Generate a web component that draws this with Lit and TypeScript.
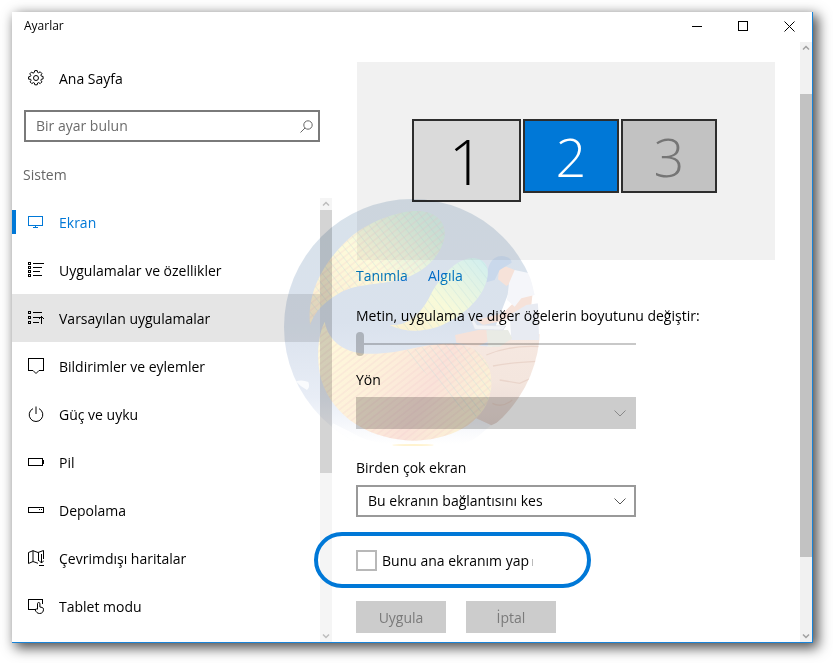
import { LitElement, html, css, svg, nothing } from "lit";
import { customElement } from "lit/decorators.js";
import { classMap } from "lit/directives/class-map.js";

const icons = {
  display: svg`<path d="M.5 2.500h14v9H.5zM7.500 12v1M5 13.500h5"/>`,
  apps: svg`<path d="M.5 .5h2v2h-2zM.5 4.500h2v2h-2zM.5 8.500h2v2h-2zM.5 12.500h2v2h-2zM5 1.500h11M5 5.500h9M5 9.500h7M5 13.500h9"/>`,
  defaults: svg`<path d="M.5 1.500h2v2h-2zM.5 6.500h2v2h-2zM.5 11.500h2v2h-2zM5 2.500h9M5 7.500h7M5 12.500h6M13.500 6v8"/><path class="smooth" d="M11 9l2.500-2.500L16 9"/>`,
  message: svg`<path d="M5 12.500H.5V.5h15v12H11"/><path class="smooth" d="M5 12.500l3 3 3-3"/>`,
  power: svg`<g class="smooth"><path d="M5 2.600a6.800 6.800 0 1 0 6 0M8 .5v7.500"/></g>`,
  battery: svg`<path d="M.5 4.500h14v7H.5zM15.500 6v4"/>`,
  storage: svg`<path d="M.5 5.500h15v5H.5zM11 7.500h1M13 7.500h1"/>`,
  map: svg`<g class="smooth"><path d="M.5 2.500L5 .7l5 1.800L15.500 .5V9M.5 2.500v11L5 11.500l5 1.800M5 .7v10.800M10.500 2.500V11M13.500 4v9M11 10.500l2.500 2.500 2.500-2.500M11 15.500h5"/></g>`,
  tablet: svg`<path d="M8 11.500H.5v-10h14V6"/><g class="smooth"><path d="M9.500 11V5.700a1.200 1.200 0 0 1 2.400 0V9l2.300.5q1.300.4 1.300 1.700c0 2.800-1.500 4.300-3.800 4.300-2.400 0-3.500-1.400-4.600-3.700.8-1.100 1.700-.9 2.400-.2"/></g>`,
  gear: svg`<g class="smooth"><circle cx="8" cy="8" r="2.500"/><path d="M6.800 .6h2.400l.4 1.800 1 .4 1.600-1 1.700 1.700-1 1.600.4 1 1.800.4v2.400l-1.800.4-.4 1 1 1.600-1.700 1.700-1.600-1-1 .4-.4 1.800H6.800l-.4-1.800-1-.4-1.600 1-1.700-1.700 1-1.600-.4-1L.6 9.200V6.800l1.800-.4.4-1-1-1.600 1.700-1.700 1.600 1 1-.4z"/></g>`,
};

const glyph = (shape: unknown) =>
  html`<svg class="icon" viewBox="0 0 16 16" aria-hidden="true">${shape}</svg>`;

const chevron = html`<svg class="chevron" viewBox="0 0 12 7" aria-hidden="true"><path d="M.5 .5L6 6 11.500 .5"/></svg>`;

const navItems = [
  { label: "Ekran", icon: icons.display, current: true },
  { label: "Uygulamalar ve özellikler", icon: icons.apps },
  { label: "Varsayılan uygulamalar", icon: icons.defaults, hover: true },
  { label: "Bildirimler ve eylemler", icon: icons.message },
  { label: "Güç ve uyku", icon: icons.power },
  { label: "Pil", icon: icons.battery },
  { label: "Depolama", icon: icons.storage },
  { label: "Çevrimdışı haritalar", icon: icons.map },
  { label: "Tablet modu", icon: icons.tablet },
];

@customElement("scroll-rail")
class ScrollRail extends LitElement {
  static styles = css`
    :host { display: flex; flex-direction: column; width: 12px; background: var(--track, #f1f1f1); }
    svg { width: 12px; height: 12px; flex: none; fill: none; stroke: var(--arrow, #a0a0a0); stroke-width: 1.5; }
    .before { flex: var(--before, 0) 0 0; }
    .thumb { flex: var(--thumb, 1) 0 0; background: var(--thumb-color, #c2c2c2); }
    .after { flex: var(--after, 1) 0 0; }
  `;
  render() {
    return html`
      <svg viewBox="0 0 12 12"><path d="M3 7.500l3-3 3 3"/></svg>
      <div class="before"></div><div class="thumb"></div><div class="after"></div>
      <svg viewBox="0 0 12 12"><path d="M3 4.500l3 3 3-3"/></svg>
    `;
  }
}

@customElement("brand-watermark")
class BrandWatermark extends LitElement {
  static styles = css`
    :host { display: block; width: 256px; height: 256px; pointer-events: none; mix-blend-mode: multiply; }
    svg { display: block; width: 100%; height: 100%; }
  `;
  render() {
    const swoosh = "M121 405C110 290 180 195 250 135C315 85 400 60 450 63C512 68 535 110 522 152C505 212 450 255 385 270C320 285 250 282 205 312C165 335 135 365 121 405Z";
    const bean = "M360 405C420 410 460 360 480 320C510 260 560 205 610 204C650 205 663 240 650 275C630 340 560 390 500 412C450 428 400 425 360 405Z";
    const bowl = "M165 395C175 450 220 488 290 491C400 495 460 455 560 462C640 470 670 530 665 590C655 690 560 745 440 752C300 752 190 680 155 570C140 510 142 440 165 395Z";
    return html`
      <svg viewBox="43 27 768 768" aria-hidden="true">
        <defs>
          <clipPath id="disc"><circle cx="427" cy="411" r="384"/></clipPath>
          <linearGradient id="sky" x1="0" y1="0" x2="0" y2="1">
            <stop offset="0" stop-color="#d8e2ea"/><stop offset=".5" stop-color="#dae2ed"/>
            <stop offset=".78" stop-color="#e8edf6"/><stop offset=".96" stop-color="#fff"/>
          </linearGradient>
          <linearGradient id="leaf" x1="0" y1="1" x2="1" y2="0">
            <stop offset="0" stop-color="#faecd0"/><stop offset=".5" stop-color="#fdfadb"/><stop offset=".85" stop-color="#d6ecdf"/><stop offset="1" stop-color="#d0e7e4"/>
          </linearGradient>
          <linearGradient id="aqua" x1="0" y1="1" x2="1" y2="0">
            <stop offset="0" stop-color="#fdf0cf"/><stop offset=".45" stop-color="#f8fad9"/><stop offset="1" stop-color="#cfeef0"/>
          </linearGradient>
          <linearGradient id="warm" x1="0" y1="0" x2="1" y2=".4">
            <stop offset="0" stop-color="#fffbdc"/><stop offset=".45" stop-color="#fdf0da"/><stop offset=".75" stop-color="#fae2d9"/><stop offset="1" stop-color="#fbf0d6"/>
          </linearGradient>
          <linearGradient id="stone" x1="0" y1="0" x2="0" y2="1">
            <stop offset="0" stop-color="#f6e8e1"/><stop offset=".5" stop-color="#f4e6de"/><stop offset="1" stop-color="#e9dad5"/>
          </linearGradient>
          <pattern id="hatch" width="20" height="16" patternUnits="userSpaceOnUse" patternTransform="rotate(-38)">
            <path d="M0 8H20" stroke="#eec4cb" stroke-width="2" stroke-opacity=".6"/>
          </pattern>
          <pattern id="mesh" width="20" height="20" patternUnits="userSpaceOnUse" patternTransform="rotate(52)">
            <path d="M0 10H20" stroke="#bcdcdc" stroke-width="1.500" stroke-opacity=".6"/>
          </pattern>
        </defs>
        <g clip-path="url(#disc)">
          <path fill="url(#sky)" d="M0 0H700L780 245L720 300L650 480L665 705L560 795H0Z"/>
          <path fill="#fff" fill-opacity=".8" d="M78 574q20-6 38 2q6 16-4 24q-18-8-34-26zM190 700q40 20 80 40t160 30v30H150z"/>
          <path fill="url(#stone)" d="M560 462L665 470L730 442L811 432V600L700 690L665 706L610 680L640 560Z"/>
          <path fill="none" stroke="#ead5cb" stroke-width="4" d="M650 495q70-30 160-25M670 528q50-10 130-14M690 570l60 10 40-18M668 640q30 15 60-10"/>
          <path fill="#f6e2d9" d="M690 222L735 240L740 268L710 288L685 268ZM750 320L790 300L785 345L700 392L640 405L620 390L700 370ZM556 435L650 415L690 440L620 470L560 458Z"/>
          <path fill="#f5f6fa" d="M735 240L780 250L795 315L755 325L735 350L712 330L718 280Z"/>
          <path fill="#e8ebf2" d="M720 375L770 345L806 340L808 450L725 450Z"/>
          <path fill="#e9ebe5" d="M650 420L715 420L728 445L690 470H655Z"/>
          <path fill="#c9d8eb" d="M650 277C652 225 665 200 695 198Q725 200 726 218L690 240L675 270Z"/>
          <path fill="#f2f4f7" stroke="#dfe3ea" stroke-width="2" d="M590 355L622 405L708 408L700 420L615 418Z"/>
          <path fill="url(#leaf)" d=${swoosh}/><path fill="url(#mesh)" d=${swoosh}/>
          <path fill="url(#hatch)" d=${swoosh}/>
          <path fill="url(#aqua)" d=${bean}/><path fill="url(#mesh)" d=${bean}/>
          <path fill="url(#warm)" d=${bowl}/><path fill="url(#hatch)" d=${bowl}/>
          <path fill="url(#mesh)" d="M400 483C450 475 500 457 560 462C640 470 670 530 665 590C660 630 640 660 610 690Z"/>
          <ellipse cx="430" cy="765" rx="62" ry="3" fill="#fff3cf"/>
        </g>
      </svg>
    `;
  }
}

@customElement("app-root")
class AppRoot extends LitElement {
  static styles = css`
    :host {
      display: block;
      padding: 12px 20px 20px 12px;
      font: 14px/24px "Open Sans", "Noto Sans", sans-serif;
      color: #000;
      background: #fff;
    }
    * { box-sizing: border-box; }
    button, input, select { font: inherit; color: inherit; margin: 0; border-radius: 0; }
    h1, h2, ul { margin: 0; padding: 0; font: inherit; list-style: none; }
    a { color: inherit; text-decoration: none; }

    .window {
      position: relative;
      background: #fff;
      border: solid #1883d7;
      border-width: 0 1px 1px 0;
      box-shadow: 4px 4px 12px 1px rgba(0, 0, 0, 0.7);
    }
    .titlebar { display: flex; justify-content: space-between; height: 30px; padding-left: 12px; }
    .title { font-size: 12px; line-height: 28px; }
    .controls { display: flex; }
    .control { width: 46px; height: 29px; padding: 0; border: 0; background: none; display: grid; place-items: center; }
    .control svg { width: 11px; height: 11px; fill: none; stroke: #000; shape-rendering: crispEdges; }
    .control .cross { shape-rendering: auto; }

    .body { display: grid; grid-template-columns: 320px 1fr 12px; }
    .icon { width: 16px; height: 16px; flex: none; fill: none; stroke: currentColor; shape-rendering: crispEdges; }
    .smooth { shape-rendering: auto; }

    .sidebar { display: flex; flex-direction: column; }
    .item { display: flex; align-items: center; gap: 15px; height: 48px; padding-left: 16px; }
    .item span { padding-top: 2px; }
    .item.hover { background: #e5e5e5; }
    .item.current { position: relative; color: #0078d7; }
    .item.current::before { content: ""; position: absolute; left: 0; top: 12px; width: 4px; height: 24px; background: #0078d7; }
    .home { margin-top: 12px; }
    .search { display: flex; align-items: center; margin: 8px 12px 0; height: 32px; border: 2px solid #7a7a7a; padding-right: 5px; }
    .search input { flex: 1; min-width: 0; border: 0; padding: 0 10px; outline: 0; background: none; }
    .search input::placeholder { color: #6b6b6b; opacity: 1; }
    .search svg { width: 13px; height: 13px; fill: none; stroke: #666; }
    .section { margin: 21px 11px 11px; color: #666; }
    .navwrap { display: grid; grid-template-columns: 1fr 12px; flex: 1; }
    .nav-rail { --track: #f5f5f5; --thumb: 263; --after: 157; --thumb-color: #d4d4d4; --arrow: #bdbdbd; }
    .page-rail { --before: 40; --thumb: 463; --after: 73; }

    .content { padding: 20px 25px 9px 24px; }
    .arrange { display: flex; justify-content: center; align-items: flex-start; gap: 2px; height: 198px; margin-left: 1px; padding: 57px 3px 0 0; background: #f1f1f1; }
    .monitor {
      width: 96px; height: 74px; padding: 0; border: 2px solid #2d2d2d;
      display: grid; place-items: center;
      font-size: 54px; line-height: 54px; font-weight: 300;
      background: #c2c2c2; color: #757575;
    }
    .monitor.large { width: 109px; height: 83px; background: #dadada; color: #000; font-size: 62px; line-height: 62px; }
    .monitor.selected { background: #0078d7; color: #fff; }
    .links { display: flex; gap: 20px; margin-top: 4px; color: #0078d7; }
    .label { display: block; width: fit-content; }
    .scale { margin-top: 16px; }
    .slider { appearance: none; display: block; width: 280px; height: 24px; margin-top: 4px; background: none; }
    .slider::-webkit-slider-runnable-track { height: 24px; background: linear-gradient(#c8c8c8, #c8c8c8) center / 100% 2px no-repeat; }
    .slider::-webkit-slider-thumb { appearance: none; width: 8px; height: 24px; border-radius: 4px; background: #c8c8c8; }
    .orientation { margin-top: 12px; }
    .multiple { margin-top: 27px; }
    .picker { display: grid; align-items: center; width: 280px; margin-top: 5px; }
    .picker > * { grid-area: 1 / 1; }
    .picker select { appearance: none; width: 100%; height: 32px; padding: 0 30px 0 10px; border: 2px solid #999; background: #fff; opacity: 1; }
    .picker select:disabled { border-color: #ccc; background: #ccc; }
    .chevron { justify-self: end; margin-right: 10px; width: 12px; height: 7px; fill: none; stroke: #555; pointer-events: none; }
    .picker select:disabled + .chevron { stroke: #888; }

    .primary { position: relative; display: flex; align-items: flex-start; gap: 5px; width: fit-content; margin-top: 32px; }
    .primary::after { content: ""; position: absolute; inset: -17px -58px -15px -42px; border: 4px solid #0078d7; border-radius: 28px; pointer-events: none; }
    .tick { appearance: none; width: 21px; height: 21px; margin-top: 1px; border: 2px solid #b8b8b8; background: #fff; }
    .primary .label::after { content: ""; display: inline-block; width: 1px; height: 7px; margin-left: 3px; background: #bbb; }
    .actions { display: flex; gap: 20px; margin-top: 28px; }
    .action { width: 90px; height: 32px; padding: 2px 0 0; border: 0; background: #ccc; color: #7a7a7a; }

    brand-watermark { position: absolute; left: 272px; top: 187px; }
  `;

  render() {
    return html`
      <main class="window">
        <header class="titlebar">
          <h1 class="title">Ayarlar</h1>
          <div class="controls">
            <button class="control" aria-label="Simge durumuna küçült"><svg viewBox="0 0 11 11"><path d="M0 5.500h10"/></svg></button>
            <button class="control" aria-label="Ekranı kapla"><svg viewBox="0 0 11 11"><path d="M.5 .5h9v9h-9z"/></svg></button>
            <button class="control" aria-label="Kapat"><svg class="cross" viewBox="0 0 11 11"><path d="M.5 .5l10 10M10.500 .5l-10 10"/></svg></button>
          </div>
        </header>
        <div class="body">
          <aside class="sidebar">
            <a class="item home" href="#">${glyph(icons.gear)}<span>Ana Sayfa</span></a>
            <div class="search">
              <input type="text" placeholder="Bir ayar bulun" aria-label="Bir ayar bulun">
              <svg viewBox="0 0 13 13" aria-hidden="true"><circle cx="8" cy="5" r="4.200"/><path d="M5 8L.5 12.500"/></svg>
            </div>
            <h2 class="section">Sistem</h2>
            <div class="navwrap">
              <ul>
                ${navItems.map((item) => html`<li>
                  <a href="#" class=${classMap({ item: true, current: !!item.current, hover: !!item.hover })}
                    aria-current=${item.current ? "page" : nothing}>${glyph(item.icon)}<span>${item.label}</span></a>
                </li>`)}
              </ul>
              <scroll-rail class="nav-rail"></scroll-rail>
            </div>
          </aside>
          <section class="content">
            <div class="arrange">
              <button class="monitor large">1</button>
              <button class="monitor selected">2</button>
              <button class="monitor">3</button>
            </div>
            <div class="links"><a href="#">Tanımla</a><a href="#">Algıla</a></div>
            <label class="label scale" for="scale">Metin, uygulama ve diğer öğelerin boyutunu değiştir:</label>
            <input class="slider" id="scale" type="range" min="0" max="4" value="0" disabled>
            <label class="label orientation" for="orientation">Yön</label>
            <div class="picker"><select id="orientation" disabled><option></option></select>${chevron}</div>
            <label class="label multiple" for="multiple">Birden çok ekran</label>
            <div class="picker"><select id="multiple"><option>Bu ekranın bağlantısını kes</option></select>${chevron}</div>
            <div class="primary">
              <input class="tick" id="primary" type="checkbox">
              <label class="label" for="primary">Bunu ana ekranım yap</label>
            </div>
            <div class="actions">
              <button class="action" disabled>Uygula</button>
              <button class="action" disabled>İptal</button>
            </div>
          </section>
          <scroll-rail class="page-rail"></scroll-rail>
        </div>
        <brand-watermark></brand-watermark>
      </main>
    `;
  }
}
